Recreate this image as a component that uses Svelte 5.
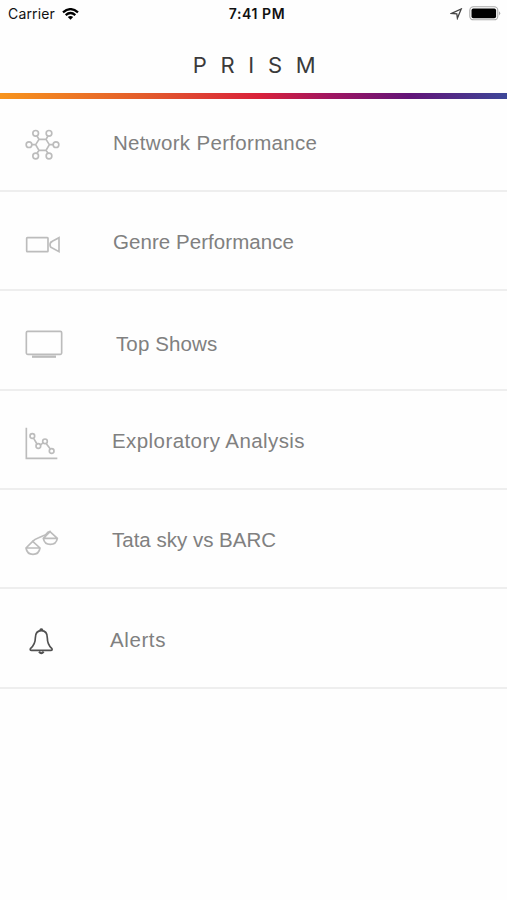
<script>
const items = [
	{ id: 'network', label: 'Network Performance' },
	{ id: 'genre', label: 'Genre Performance' },
	{ id: 'shows', label: 'Top Shows' },
	{ id: 'analysis', label: 'Exploratory Analysis' },
	{ id: 'compare', label: 'Tata sky vs BARC' },
	{ id: 'alerts', label: 'Alerts' }
];
</script>

<style>
	:global(body) {
		background: #fefefe;
		font-family: "Liberation Sans", Arial, sans-serif;
	}

	.screen {
		height: 900px;
		overflow: hidden;
	}

	.status {
		display: grid;
		grid-template-columns: 1fr auto 1fr;
		align-items: center;
		box-sizing: border-box;
		height: 27px;
		padding: 0 6px 0 8px;
		font-family: Inter, sans-serif;
		font-size: 14px;
		color: #111;
	}

	.carrier, .power {
		display: flex;
		align-items: center;
	}

	.carrier {
		gap: 7px;
		letter-spacing: 0.15px;
	}

	.power {
		justify-content: flex-end;
		gap: 6px;
	}

	.time {
		padding-left: 5px;
		font-size: 14px;
		font-weight: 600;
		letter-spacing: 0.6px;
	}

	h1 {
		height: 66px;
		margin: 0;
		padding-left: 15px;
		box-sizing: border-box;
		font-family: Inter, sans-serif;
		font-size: 22px;
		font-weight: 400;
		line-height: 76px;
		letter-spacing: 13.7px;
		text-align: center;
		color: #3a3a3a;
	}

	.rainbow {
		height: 6px;
		background: linear-gradient(90deg, #f7941d 0%, #e2582c 30%, #d9213a 51%, #a01560 65%, #611478 81%, #3d4798 100%);
	}

	ul {
		margin: 0;
		padding: 0;
		list-style: none;
	}

	li {
		display: flex;
		align-items: flex-start;
		box-sizing: border-box;
		height: 99.33px;
		padding-left: 10px;
		border-bottom: 2px solid #eee;
	}

	.icon {
		width: 70px;
		height: 60px;
		margin-top: 24px;
		flex: none;
		fill: none;
		stroke: #bcbcbc;
		stroke-width: 5;
	}

	.label {
		margin: 36px 0 0 33px;
		font-size: 20.5px;
		line-height: 28px;
		letter-spacing: 0.32px;
		color: #808080;
	}

	.network {
		height: 93px;
	}

	.network .icon {
		margin-top: 16px;
	}

	.network .label {
		margin-top: 30px;
	}

	.genre .icon {
		margin-top: 23px;
	}

	.genre .label {
		letter-spacing: 0.06px;
	}

	.shows .label {
		margin: 39px 0 0 36px;
		letter-spacing: 0.12px;
	}

	.analysis .label, .compare .label {
		margin-left: 32px;
	}

	.analysis .label {
		letter-spacing: 0.42px;
	}

	.compare .icon {
		margin-top: 25px;
	}

	.compare .label {
		letter-spacing: 0;
	}

	.alerts .icon {
		margin-top: 21px;
		stroke: #505050;
	}

	.alerts .label {
		margin: 37px 0 0 30px;
		letter-spacing: 0.6px;
	}
</style>

<div class="screen">
	<div class="status">
		<div class="carrier">
			<span>Carrier</span>
			<svg width="17" height="12" viewBox="0 0 17 12" fill="none" stroke="#000" stroke-width="2.3">
				<path d="M1 4.3Q8.5-2 16 4.3" />
				<path d="M3.7 7.1Q8.5 3 13.3 7.1" />
				<path d="M5.8 9.1Q8.5 6.9 11.2 9.1L8.5 11.8Z" fill="#000" stroke="none" />
			</svg>
		</div>
		<span class="time">7:41 PM</span>
		<div class="power">
			<svg width="13" height="12" viewBox="0 0 13 12" fill="none" stroke="#444" stroke-width="1.3">
				<path d="M1.6 5.4L11.2 1L7.4 10.2L6.8 5.8Z" />
			</svg>
			<svg width="32" height="15" viewBox="0 0 32 15">
				<rect x=".8" y=".8" width="28" height="13" rx="3.6" fill="#fff" stroke="#aaa" stroke-width="1.1" />
				<rect x="2.5" y="2.6" width="24.6" height="9.6" rx="1.8" fill="#000" />
				<path d="M30.2 5.2Q32.2 7.3 30.2 9.4Z" fill="#999" />
			</svg>
		</div>
	</div>

	<h1>PRISM</h1>
	<div class="rainbow"></div>

	<ul>
		{#each items as item}
			<li class={item.id}>
				<svg class="icon" viewBox="0 0 210 180">
					{#if item.id === 'network'}
						<path d="M87 73H108L118 89L108 106H87L77 89ZM87 73L81 63M108 73L114 63M118 89H130M108 106L114 115M87 106L81 115M77 89H66" />
						<circle cx="77" cy="55" r="8.5" />
						<circle cx="117" cy="55" r="8.5" />
						<circle cx="138" cy="89" r="8.5" />
						<circle cx="117" cy="123" r="8.5" />
						<circle cx="77" cy="123" r="8.5" />
						<circle cx="57" cy="89" r="8.5" />
					{:else if item.id === 'genre'}
						<rect x="50" y="68" width="64" height="42" rx="2" />
						<path d="M147 68V110L127 99Q120 97 120 89Q120 81 127 79Z" />
					{:else if item.id === 'shows'}
						<rect x="49" y="49" width="106" height="69" rx="4" />
						<path d="M66 125H138" stroke-width="7" />
					{:else if item.id === 'analysis'}
						<path d="M49 38V130H142" />
						<path d="M71 70L81 87M92 90L100 82M109 86L121 102" />
						<circle cx="67" cy="63" r="7" />
						<circle cx="85" cy="93" r="7" />
						<circle cx="105" cy="79" r="7" />
						<circle cx="125" cy="108" r="7" />
					{:else if item.id === 'compare'}
						<path d="M68 79Q74 72 86 68L107 59Q113 50 122 49" />
						<path d="M68 79L48 99Q51 118 69 118Q87 118 90 99ZM48 99H90" />
						<path d="M120 50L100 70Q103 88 121 88Q139 88 142 70ZM100 70H142" />
					{:else}
						<path d="M94 62C81 62 76 70 76 84C76 99 71 107 62 115Q58 121 65 121H122Q129 121 125 115C116 107 112 99 112 84C112 70 107 62 94 62Z" />
						<path d="M90 60Q94 55 98 60M87 125Q94 134 101 125" stroke-width="6" />
					{/if}
				</svg>
				<span class="label">{item.label}</span>
			</li>
		{/each}
	</ul>
</div>
